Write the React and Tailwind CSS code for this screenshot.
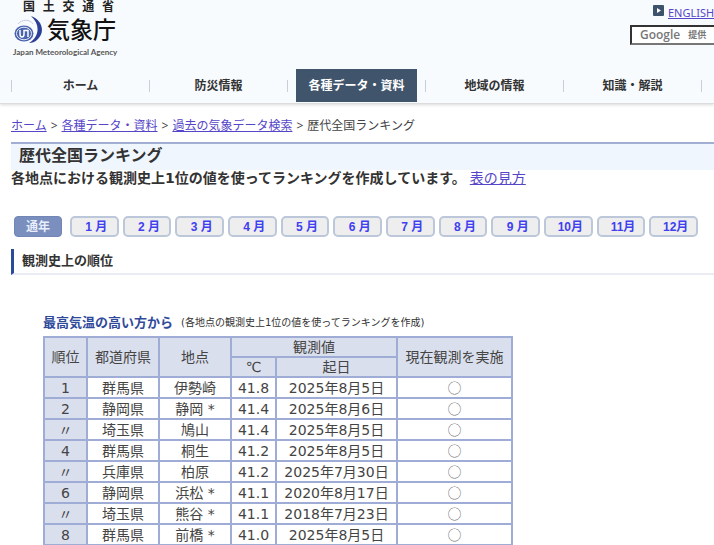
const navItems = [
  { label: "ホーム" },
  { label: "防災情報" },
  { label: "各種データ・資料", active: true },
  { label: "地域の情報" },
  { label: "知識・解説" },
];

const months = ["1 月", "2 月", "3 月", "4 月", "5 月", "6 月", "7 月", "8 月", "9 月", "10月", "11月", "12月"];

const rows = [
  { rank: "1", pref: "群馬県", place: "伊勢崎", temp: "41.8", date: "2025年8月5日" },
  { rank: "2", pref: "静岡県", place: "静岡 *", temp: "41.4", date: "2025年8月6日" },
  { rank: "〃", pref: "埼玉県", place: "鳩山", temp: "41.4", date: "2025年8月5日" },
  { rank: "4", pref: "群馬県", place: "桐生", temp: "41.2", date: "2025年8月5日" },
  { rank: "〃", pref: "兵庫県", place: "柏原", temp: "41.2", date: "2025年7月30日" },
  { rank: "6", pref: "静岡県", place: "浜松 *", temp: "41.1", date: "2020年8月17日" },
  { rank: "〃", pref: "埼玉県", place: "熊谷 *", temp: "41.1", date: "2018年7月23日" },
  { rank: "8", pref: "群馬県", place: "前橋 *", temp: "41.0", date: "2025年8月5日" },
];

function LogoMark() {
  return (
    <svg viewBox="0 0 30 30" className="w-[30px] h-[30px] shrink-0" aria-hidden="true">
      <path d="M18 1 C28 4 33 16 25 24 C22 27 19 28 16 28 C26 22 28 10 18 1Z" fill="#2b3f97" />
      <path d="M5 9 C9 4 17 4 20 9" fill="none" stroke="#c3cce5" strokeWidth="1" />
      <ellipse cx="11" cy="18.5" rx="9.5" ry="8" fill="#4a63af" />
      <ellipse cx="11" cy="18.5" rx="7.5" ry="6.3" fill="none" stroke="#e6ebf7" strokeWidth="1" />
      <path d="M7 15 V19 Q7 22 9 22 Q11 22 11 19 V15.5 H15 V22" fill="none" stroke="#fff" strokeWidth="1.5" />
    </svg>
  );
}

function Header() {
  return (
    <header className="bg-[#f8fbfe] border-b border-[#dcdcdc] shadow-[0_1px_3px_rgba(0,0,0,0.15)] overflow-hidden">
      <div className="flex justify-between h-[69px]">
        <div className="pl-[13px] w-[118px] shrink-0">
          <div className="h-[14px] pl-[10px] pr-1 flex justify-between text-[12px] leading-[14px] font-bold text-[#222]">
            <span>国</span><span>土</span><span>交</span><span>通</span><span>省</span>
          </div>
          <div className="flex items-center gap-1 h-8">
            <LogoMark />
            <span className="text-[23px] leading-8 font-medium text-[#111] whitespace-nowrap">気象庁</span>
          </div>
          <p className="text-[8px] leading-3 font-bold text-[#555] whitespace-nowrap font-[Lato,sans-serif]">Japan Meteorological Agency</p>
        </div>
        <div className="w-[84px] shrink-0">
          <div className="flex items-center gap-1 h-[25px] pl-[23px] whitespace-nowrap">
            <svg viewBox="0 0 11 11" className="w-[11px] h-[11px] mb-1 shrink-0" aria-hidden="true">
              <rect width="11" height="11" rx="1" fill="#3d526b" />
              <path d="M4 3 L8 5.5 L4 8Z" fill="#fff" />
            </svg>
            <a href="#english" className="text-[11px] leading-4 text-[#5546c8] underline font-['Noto_Sans',sans-serif]">ENGLISH</a>
          </div>
          <label className="flex items-center h-5 w-[160px] border-2 border-[#333] border-b-[#777] bg-white pl-2 gap-2 text-[#777] whitespace-nowrap">
            <span className="text-[12px] leading-4 font-semibold font-['Open_Sans',sans-serif]">Google</span>
            <span className="text-[9px] leading-4 font-bold">提供</span>
            <input type="text" className="min-w-0 flex-1 bg-transparent outline-none" />
          </label>
        </div>
      </div>
      <nav className="flex items-center h-[34px] pl-[11px]">
        {navItems.map((item) => (
          <div key={item.label} className="flex items-center w-[138px] h-full shrink-0">
            <span className="w-px h-3 bg-[#c9ced8]" />
            <a
              href="#nav"
              className={item.active
                ? "flex-1 mx-2 h-[33px] self-start flex items-center justify-center bg-[#40546b] text-white text-[12px] font-bold"
                : "flex-1 mx-2 h-[33px] self-start flex items-center justify-center text-[#333] text-[12px] font-bold"}
            >
              {item.label}
            </a>
          </div>
        ))}
        <span className="w-px h-3 bg-[#c9ced8] shrink-0" />
      </nav>
    </header>
  );
}

function Breadcrumb() {
  return (
    <nav className="flex gap-1 pt-3 px-[11px] text-[12px] leading-5 text-[#444] whitespace-nowrap font-['Noto_Sans','Noto_Sans_CJK_JP',sans-serif]">
      <a href="#home" className="text-[#5546c8] underline">ホーム</a>
      <span>&gt;</span>
      <a href="#data" className="text-[#5546c8] underline">各種データ・資料</a>
      <span>&gt;</span>
      <a href="#search" className="text-[#5546c8] underline">過去の気象データ検索</a>
      <span>&gt;</span>
      <span>歴代全国ランキング</span>
    </nav>
  );
}

function MonthBar() {
  return (
    <div className="flex gap-2 pl-[14px] pr-4 text-[12px] font-bold">
      <button className="w-12 h-[21px] shrink-0 rounded border border-[#7186b4] bg-[#7a8fbd] text-[#e8eefb]">通年</button>
      <div className="grid grid-cols-12 gap-1 flex-1">
        {months.map((m) => (
          <button key={m} className="h-[21px] pl-1 rounded-[5px] border-2 border-[#bcc8da] bg-[#eeeeee] text-[#4040f0] leading-4 whitespace-nowrap font-['Liberation_Sans','Noto_Sans_CJK_JP',sans-serif]">
            {m}
          </button>
        ))}
      </div>
    </div>
  );
}

function RankingTable() {
  const th = "border-2 border-[#9eacd6] bg-[#dadfed] p-0 font-normal";
  const td = "border-2 border-[#9eacd6] bg-white p-0";
  return (
    <table className="table-fixed border-collapse w-[470px] text-center text-[14px] leading-[18px] text-[#444] whitespace-nowrap">
      <colgroup>
        <col className="w-[43px]" />
        <col className="w-[72px]" />
        <col className="w-[72px]" />
        <col className="w-[45px]" />
        <col className="w-[121px]" />
        <col className="w-[115px]" />
      </colgroup>
      <thead>
        <tr className="h-5">
          <th rowSpan={2} className={th}>順位</th>
          <th rowSpan={2} className={th}>都道府県</th>
          <th rowSpan={2} className={th}>地点</th>
          <th colSpan={2} className={th}>観測値</th>
          <th rowSpan={2} className={th}>現在観測を実施</th>
        </tr>
        <tr className="h-5">
          <th className={th}>℃</th>
          <th className={th}>起日</th>
        </tr>
      </thead>
      <tbody>
        {rows.map((r, i) => (
          <tr key={i} className="h-[21px]">
            <th className={th}>{r.rank}</th>
            <td className={td}>{r.pref}</td>
            <td className={td}>{r.place}</td>
            <td className={td}>{r.temp}</td>
            <td className={td}>{r.date}</td>
            <td className={td}><span className="text-[#777] font-['Noto_Sans_CJK_JP',sans-serif]">○</span></td>
          </tr>
        ))}
      </tbody>
    </table>
  );
}

export default function App() {
  return (
    <div lang="ja" className="bg-white overflow-hidden font-['DejaVu_Sans','Noto_Sans_CJK_JP',sans-serif]">
      <Header />
      <Breadcrumb />
      <main>
        <h1 className="mt-[6px] ml-[11px] pl-2 border-t-2 border-[#a3afd2] bg-[#f0f6fe] text-[16px] leading-[24px] pb-0.5 font-bold text-[#333]">
          歴代全国ランキング
        </h1>
        <p className="px-[11px] flex gap-1 text-[14px] leading-4 text-[#333] whitespace-nowrap">
          <b>各地点における観測史上1位の値を使ってランキングを作成しています。</b>
          <a href="#guide" className="text-[#5546c8] underline">表の見方</a>
        </p>
        <div className="pt-[30px]">
          <MonthBar />
        </div>
        <h2 className="mt-3 ml-[11px] pl-2 border-l-[3px] border-l-[#2c4a9a] border-b-2 border-b-[#ebecf3] text-[13px] leading-6 font-bold text-[#333]">
          観測史上の順位
        </h2>
        <div className="pl-[43px] pt-[34px]">
          <div className="flex items-center gap-2 h-[27px] whitespace-nowrap">
            <h3 className="text-[13px] font-bold text-[#2f4a9b]">最高気温の高い方から</h3>
            <span className="text-[10px] text-[#333]">(各地点の観測史上1位の値を使ってランキングを作成)</span>
          </div>
          <RankingTable />
        </div>
      </main>
    </div>
  );
}
